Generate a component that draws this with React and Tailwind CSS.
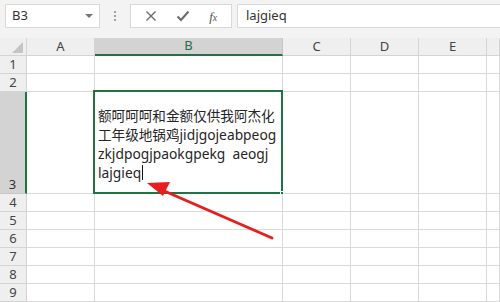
import React from "react";

const cols = [
  { key: "A", w: "w-[68px]" },
  { key: "B", w: "w-[188px]" },
  { key: "C", w: "w-[68px]" },
  { key: "D", w: "w-[68px]" },
  { key: "E", w: "w-[68px]" },
  { key: "F", w: "flex-1" },
];

const rows = [1, 2, 3, 4, 5, 6, 7, 8, 9];

function Row({ n }) {
  const tall = n === 3;
  const h = tall ? "h-[102px]" : "h-[18px]";
  return (
    <div className={`flex ${h}`}>
      <div
        className={`w-[27px] shrink-0 flex items-end justify-center border-b border-r text-[13px] leading-[17px] ${
          tall
            ? "bg-[#d3d3d3] border-r-[#217346] border-r-2 border-b-[#c6c6c6] text-[#333]"
            : "bg-[#efefef] border-[#d4d4d4] text-[#444]"
        }`}
      >
        {n}
      </div>
      {cols.map((c) => (
        <div
          key={c.key}
          className={`${c.w} shrink-0 border-b border-r border-[#dadada] bg-white relative`}
        >
          {tall && c.key === "B" && (
            <>
              <div className="absolute -left-[2px] -top-[2px] -right-[1px] -bottom-[1px] border-2 border-[#217346]" />
              <div className="absolute -right-[3px] -bottom-[3px] w-[5px] h-[5px] bg-[#217346] border border-white" />
              <div className="pl-[3px] pt-[14px] text-[13.8px] leading-[19px] text-[#262626] font-['Noto_Sans','Noto_Sans_CJK_SC',sans-serif] whitespace-nowrap">
                <div className="text-[13.6px]">额呵呵呵和金额仅供我阿杰化</div>
                <div>
                  <span className="text-[13.6px]">工年级地锅鸡</span>jidjgojeabpeog
                </div>
                <div>zkjdpogjpaokgpekg&nbsp;&nbsp;aeogj</div>
                <div className="flex items-center">
                  lajgieq<span className="inline-block w-px h-[15px] bg-[#111] ml-[1px]" />
                </div>
              </div>
            </>
          )}
        </div>
      ))}
    </div>
  );
}

export default function App() {
  return (
    <div className="w-[500px] h-[302px] overflow-hidden bg-[#f3f3f3] relative font-['Noto_Sans','Liberation_Sans',sans-serif]">
      {/* formula bar */}
      <div className="flex items-start h-[38px] pt-[4px]">
        <div className="ml-[5px] w-[95px] h-[24px] bg-white border border-[#d9d9d9] flex items-center pl-[6px] pr-[6px] text-[13px] text-[#333]">
          <span className="flex-1">B3</span>
          <span className="w-0 h-0 border-l-[4px] border-r-[4px] border-t-[4px] border-l-transparent border-r-transparent border-t-[#777]" />
        </div>
        <div className="w-[30px] h-[24px] flex flex-col items-center justify-center gap-[2px]">
          <span className="w-[2px] h-[2px] bg-[#a0a0a0]" />
          <span className="w-[2px] h-[2px] bg-[#a0a0a0]" />
          <span className="w-[2px] h-[2px] bg-[#a0a0a0]" />
        </div>
        <div className="w-[102px] h-[24px] bg-white border border-[#d9d9d9] flex items-center justify-around px-[4px] text-[#6a6a6a]">
          <svg width="12" height="12" viewBox="0 0 12 12">
            <path d="M1.5 1.5 L10.5 10.5 M10.5 1.5 L1.5 10.5" stroke="#6a6a6a" strokeWidth="1.4" />
          </svg>
          <svg width="14" height="12" viewBox="0 0 14 12">
            <path d="M1.5 6.5 L5 10 L12.5 1.5" stroke="#6a6a6a" strokeWidth="2" fill="none" />
          </svg>
          <span className="italic text-[13px] font-['Liberation_Serif',serif] text-[#555] leading-none">
            f<span className="text-[10px]">x</span>
          </span>
        </div>
        <div className="ml-[5px] flex-1 h-[24px] bg-white border border-[#d9d9d9] border-r-0 flex items-center pl-[8px] text-[13px] text-[#333]">
          lajgieq
        </div>
      </div>

      {/* column headers */}
      <div className="flex h-[18px]">
        <div className="w-[27px] shrink-0 bg-[#efefef] border-r border-b border-[#d4d4d4] flex items-end justify-end pr-[3px] pb-[2px]">
          <svg width="11" height="11" viewBox="0 0 11 11">
            <polygon points="11,0 11,11 0,11" fill="#c4c4c4" />
          </svg>
        </div>
        {cols.map((c) => (
          <div
            key={c.key}
            className={`${c.w} shrink-0 flex items-center justify-center text-[13px] ${
              c.key === "B"
                ? "bg-[#d3d3d3] border-b-2 border-b-[#217346] border-r border-r-[#c6c6c6] text-[#217346]"
                : "bg-[#efefef] border-b border-r border-[#d4d4d4] text-[#444]"
            }`}
          >
            {c.key === "F" ? "" : c.key}
          </div>
        ))}
      </div>

      {rows.map((n) => (
        <Row key={n} n={n} />
      ))}

      {/* red arrow annotation */}
      <svg className="absolute left-0 top-0 pointer-events-none" width="500" height="302">
        <line x1="272" y1="238" x2="162" y2="190" stroke="#e81e1e" strokeWidth="3" strokeLinecap="round" />
        <polygon points="147,183 170,182 163,196" fill="#e81e1e" />
      </svg>
    </div>
  );
}
